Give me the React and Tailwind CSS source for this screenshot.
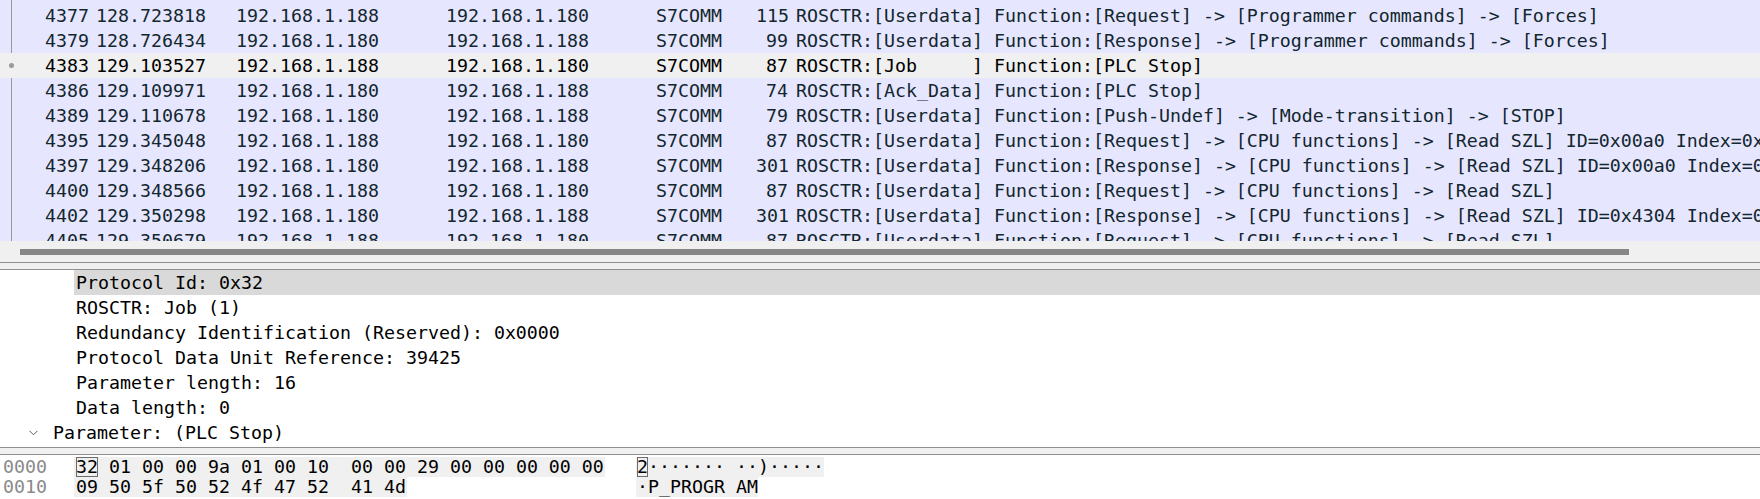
import React from "react";

const packets = [
  { no: "4377", time: "128.723818", src: "192.168.1.188", dst: "192.168.1.180", len: "115", info: "ROSCTR:[Userdata] Function:[Request] -> [Programmer commands] -> [Forces]" },
  { no: "4379", time: "128.726434", src: "192.168.1.180", dst: "192.168.1.188", len: "99", info: "ROSCTR:[Userdata] Function:[Response] -> [Programmer commands] -> [Forces]" },
  { no: "4383", time: "129.103527", src: "192.168.1.188", dst: "192.168.1.180", len: "87", info: "ROSCTR:[Job     ] Function:[PLC Stop]", selected: true },
  { no: "4386", time: "129.109971", src: "192.168.1.180", dst: "192.168.1.188", len: "74", info: "ROSCTR:[Ack_Data] Function:[PLC Stop]" },
  { no: "4389", time: "129.110678", src: "192.168.1.180", dst: "192.168.1.188", len: "79", info: "ROSCTR:[Userdata] Function:[Push-Undef] -> [Mode-transition] -> [STOP]" },
  { no: "4395", time: "129.345048", src: "192.168.1.188", dst: "192.168.1.180", len: "87", info: "ROSCTR:[Userdata] Function:[Request] -> [CPU functions] -> [Read SZL] ID=0x00a0 Index=0x0000" },
  { no: "4397", time: "129.348206", src: "192.168.1.180", dst: "192.168.1.188", len: "301", info: "ROSCTR:[Userdata] Function:[Response] -> [CPU functions] -> [Read SZL] ID=0x00a0 Index=0x0000" },
  { no: "4400", time: "129.348566", src: "192.168.1.188", dst: "192.168.1.180", len: "87", info: "ROSCTR:[Userdata] Function:[Request] -> [CPU functions] -> [Read SZL]" },
  { no: "4402", time: "129.350298", src: "192.168.1.180", dst: "192.168.1.188", len: "301", info: "ROSCTR:[Userdata] Function:[Response] -> [CPU functions] -> [Read SZL] ID=0x4304 Index=0x0000" },
  { no: "4405", time: "129.350679", src: "192.168.1.188", dst: "192.168.1.180", len: "87", info: "ROSCTR:[Userdata] Function:[Request] -> [CPU functions] -> [Read SZL]" },
];

const details = [
  "ROSCTR: Job (1)",
  "Redundancy Identification (Reserved): 0x0000",
  "Protocol Data Unit Reference: 39425",
  "Parameter length: 16",
  "Data length: 0",
];

function PacketRow({ p }) {
  return (
    <div className={`relative flex h-[25px] shrink-0 items-center whitespace-pre ${p.selected ? "bg-[#f0f0f0] text-black" : "text-[#12272e]"}`}>
      {p.selected && <span className="absolute left-[9px] top-[10px] h-[5px] w-[5px] rounded-full bg-[#9a9a9a]" />}
      <span className="w-[96px] shrink-0 pr-[7px] text-right">{p.no}</span>
      <span className="w-[140px] shrink-0">{p.time}</span>
      <span className="w-[210px] shrink-0">{p.src}</span>
      <span className="w-[210px] shrink-0">{p.dst}</span>
      <span className="w-[100px] shrink-0">S7COMM</span>
      <span className="w-[40px] shrink-0 pr-[8px] text-right">{p.len}</span>
      <span className="shrink-0">{p.info}</span>
    </div>
  );
}

export default function App() {
  return (
    <div className="flex h-[499px] w-[1760px] flex-col overflow-hidden bg-white font-['DejaVu_Sans_Mono','Liberation_Mono',monospace] text-[18.27px]">
      {/* packet list */}
      <div className="relative flex h-[241px] shrink-0 flex-col overflow-hidden bg-[#e7e6ff] pt-[3px]">
        <div className="absolute bottom-0 left-[11px] top-0 w-px bg-[#9a9a9a]" />
        {packets.map((p) => (
          <PacketRow key={p.no} p={p} />
        ))}
      </div>

      {/* horizontal scrollbar */}
      <div className="h-[21px] shrink-0 bg-[#f0f0f0] pt-[8px]">
        <div className="ml-[20px] h-[6px] w-[1609px] bg-[#878787]" />
      </div>

      <div className="h-px shrink-0 bg-[#8f8f8f]" />
      <div className="h-[6px] shrink-0 bg-[#f0f0f0]" />
      <div className="h-px shrink-0 bg-[#8f8f8f]" />

      {/* packet details */}
      <div className="flex h-[177px] shrink-0 flex-col whitespace-pre text-black">
        <div className="ml-[74px] flex h-[25px] items-center bg-[#d9d9d9] pl-[2px]">Protocol Id: 0x32</div>
        {details.map((d) => (
          <div key={d} className="flex h-[25px] items-center pl-[76px]">{d}</div>
        ))}
        <div className="flex h-[25px] items-center pl-[29px]">
          <svg width="9" height="6" viewBox="0 0 9 6" className="shrink-0">
            <path d="M0.5 0.8 L4.5 4.8 L8.5 0.8" fill="none" stroke="#5a5a5a" strokeWidth="1" />
          </svg>
          <span className="ml-[15px]">Parameter: (PLC Stop)</span>
        </div>
      </div>

      <div className="h-px shrink-0 bg-[#8f8f8f]" />
      <div className="h-[6px] shrink-0 bg-[#f0f0f0]" />
      <div className="h-px shrink-0 bg-[#8f8f8f]" />

      {/* bytes pane */}
      <div className="flex flex-1 flex-col whitespace-pre pt-[2px] text-black">
        <div className="flex h-[20px] items-center leading-[20px]">
          <span className="w-[74px] shrink-0 pl-[3px] text-[#8a8a8a]">0000</span>
          <span className="w-[562px] shrink-0">
            <span className="inline-block h-[20px] bg-[#f0f0f0] pl-[2px] pr-[1px]">
              <span className="inline-block h-[20px] outline outline-1 -outline-offset-1 outline-[#6b6b6b]">32</span>
              {" 01 00 00 9a 01 00 10  00 00 29 00 00 00 00 00"}
            </span>
          </span>
          <span className="inline-block h-[20px] bg-[#f0f0f0] pl-[1px]">
            <span className="inline-block h-[20px] outline outline-1 -outline-offset-1 outline-[#6b6b6b]">2</span>
            {"······· ··)·····"}
          </span>
        </div>
        <div className="flex h-[20px] items-center leading-[20px]">
          <span className="w-[74px] shrink-0 pl-[3px] text-[#8a8a8a]">0010</span>
          <span className="w-[562px] shrink-0">
            <span className="inline-block h-[20px] bg-[#f0f0f0] pl-[2px] pr-[1px]">09 50 5f 50 52 4f 47 52  41 4d</span>
          </span>
          <span className="inline-block h-[20px] bg-[#f0f0f0] pl-[1px]">·P_PROGR AM</span>
        </div>
      </div>
    </div>
  );
}
